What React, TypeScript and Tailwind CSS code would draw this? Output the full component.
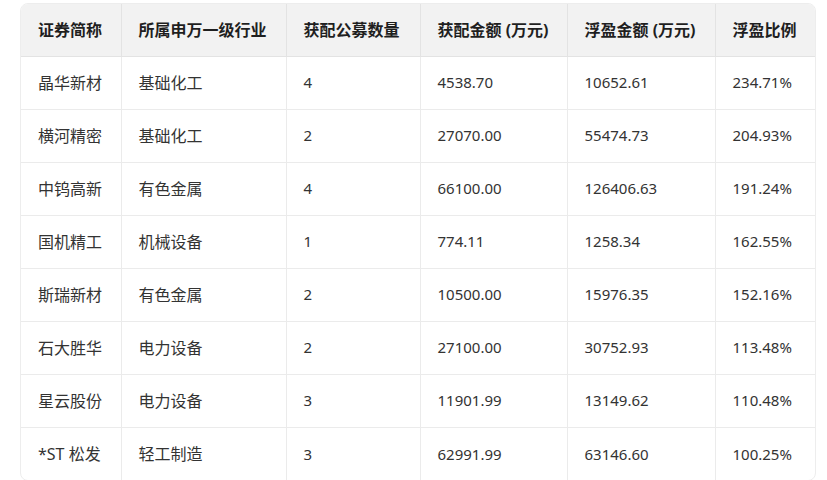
const columns = ['证券简称', '所属申万一级行业', '获配公募数量', '获配金额 (万元)', '浮盈金额 (万元)', '浮盈比例']
const widths = ['w-[100px]', 'w-[165px]', 'w-[134px]', 'w-[147px]', 'w-[148px]', 'w-[102px]']

const rows = [
  ['晶华新材', '基础化工', '4', '4538.70', '10652.61', '234.71%'],
  ['横河精密', '基础化工', '2', '27070.00', '55474.73', '204.93%'],
  ['中钨高新', '有色金属', '4', '66100.00', '126406.63', '191.24%'],
  ['国机精工', '机械设备', '1', '774.11', '1258.34', '162.55%'],
  ['斯瑞新材', '有色金属', '2', '10500.00', '15976.35', '152.16%'],
  ['石大胜华', '电力设备', '2', '27100.00', '30752.93', '113.48%'],
  ['星云股份', '电力设备', '3', '11901.99', '13149.62', '110.48%'],
  ['*ST 松发', '轻工制造', '3', '62991.99', '63146.60', '100.25%'],
]

export default function App() {
  return (
    <div className="w-[827px] h-[480px] overflow-hidden bg-white pl-[20px] pt-[3px] font-['Noto_Sans','Noto_Sans_CJK_SC',sans-serif]">
      <div className="w-[796px] rounded-lg border border-[#ededed] overflow-hidden">
        <table className="table-fixed border-collapse w-full">
          <colgroup>
            {widths.map((w, i) => (
              <col key={i} className={w} />
            ))}
          </colgroup>
          <thead>
            <tr className="bg-[#f2f2f2]">
              {columns.map((c, i) => (
                <th
                  key={c}
                  className={`h-[52px] px-[17px] text-left text-[16px] font-bold text-[#1f1f1f] border-b border-[#e3e3e3] ${i > 0 ? 'border-l' : ''}`}
                >
                  {c}
                </th>
              ))}
            </tr>
          </thead>
          <tbody>
            {rows.map((r, ri) => (
              <tr key={ri}>
                {r.map((v, ci) => (
                  <td
                    key={ci}
                    className={`h-[53px] px-[17px] text-[#333] border-[#ebebeb] ${ci < 2 ? 'text-[16px]' : 'text-[15px]'} ${ri < rows.length - 1 ? 'border-b' : ''} ${ci > 0 ? 'border-l' : ''}`}
                  >
                    {v}
                  </td>
                ))}
              </tr>
            ))}
          </tbody>
        </table>
      </div>
    </div>
  )
}
